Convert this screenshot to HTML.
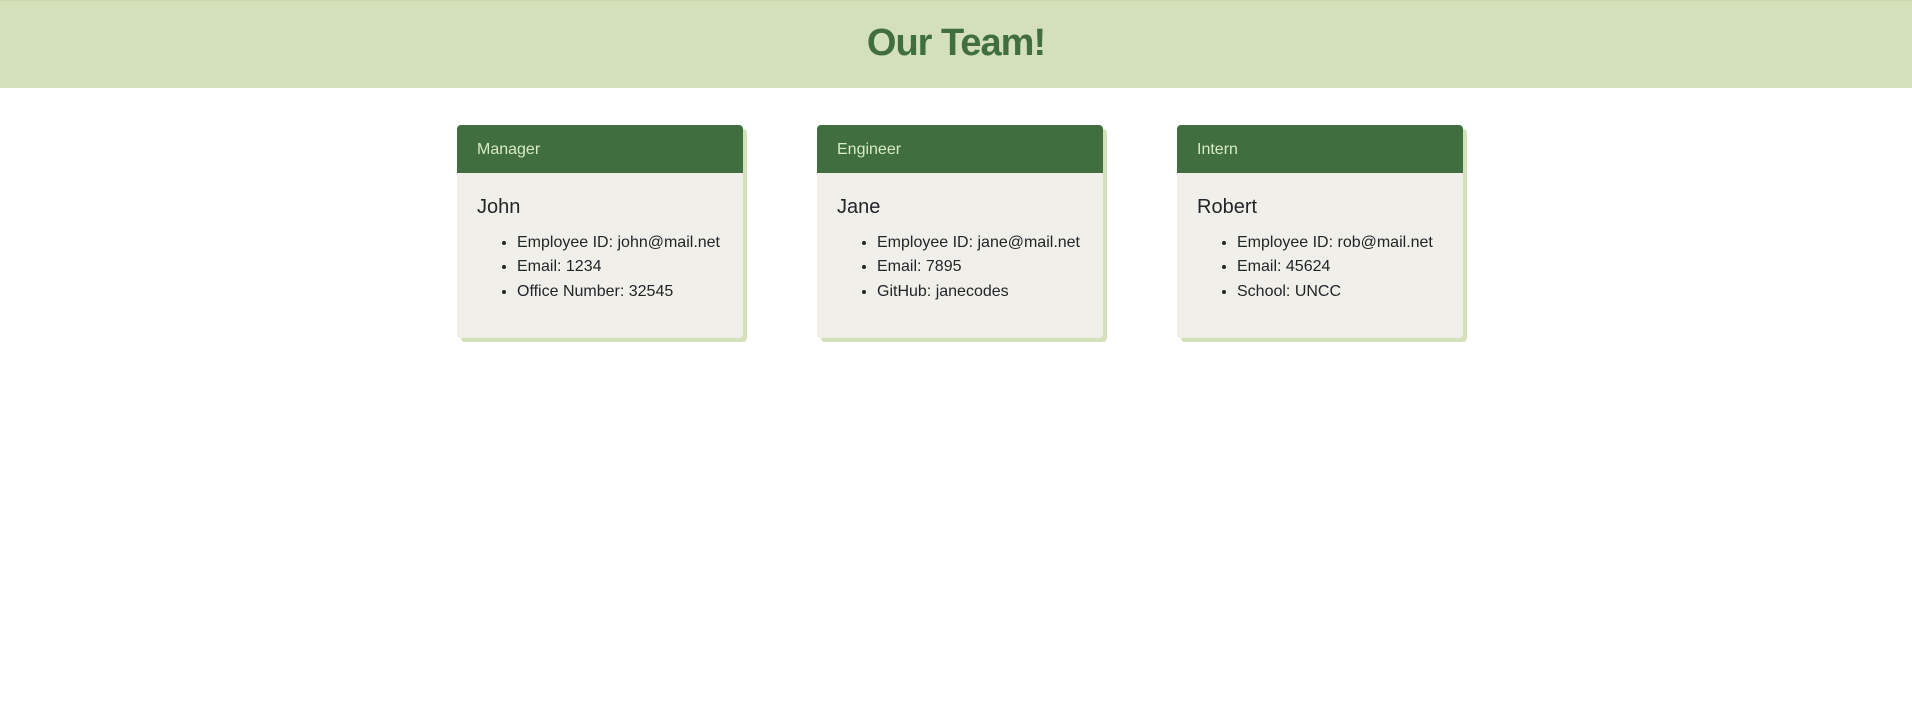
<!DOCTYPE html>
<html><head><meta charset="utf-8"><style>
*{box-sizing:border-box}
body{margin:0;font-family:"Liberation Sans",Arial,sans-serif;color:#212529;background:#fff;width:1912px;height:717px;overflow:hidden}
.top{background:#d3e0b9;height:88px;border-top:1px solid #c8d6ad;text-align:center}
.top h1{margin:0;padding-top:19px;font-size:38px;line-height:46px;font-weight:bold;color:#406e3e;letter-spacing:-1px}
.card{position:absolute;top:125px;width:286px;height:213px;background:#f0efea;border-radius:4px;box-shadow:4px 4px 0 #d3e0b9}
.hd{height:48px;background:#406e3e;color:#d8ebc2;font-size:16px;line-height:50px;padding-left:20px;border-radius:4px 4px 0 0}
.bd{padding:22px 20px 20px}
.bd h5{margin:0 0 12px;font-size:20px;line-height:24px;font-weight:500}
.bd ul{margin:0;padding-left:40px;font-size:16px;line-height:24.4px}
</style></head><body>
<div class="top"><h1>Our Team!</h1></div>
<div class="card" style="left:457px"><div class="hd">Manager</div><div class="bd"><h5>John</h5><ul><li>Employee ID: john@mail.net</li><li>Email: 1234</li><li>Office Number: 32545</li></ul></div></div>
<div class="card" style="left:817px"><div class="hd">Engineer</div><div class="bd"><h5>Jane</h5><ul><li>Employee ID: jane@mail.net</li><li>Email: 7895</li><li>GitHub: janecodes</li></ul></div></div>
<div class="card" style="left:1177px"><div class="hd">Intern</div><div class="bd"><h5>Robert</h5><ul><li>Employee ID: rob@mail.net</li><li>Email: 45624</li><li>School: UNCC</li></ul></div></div>
</body></html>
